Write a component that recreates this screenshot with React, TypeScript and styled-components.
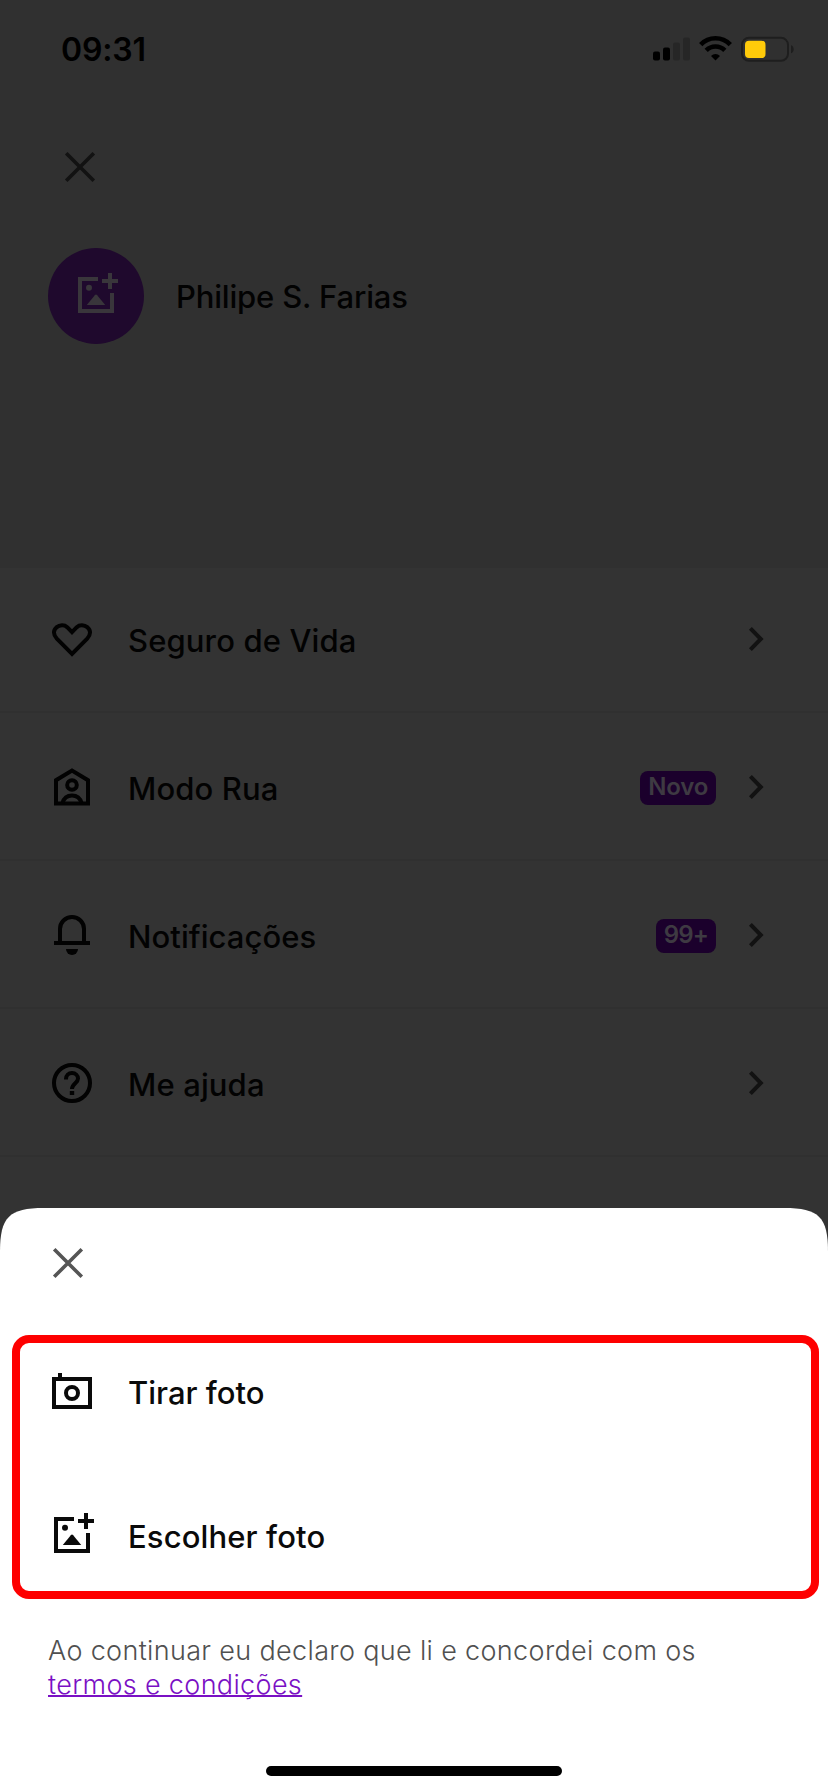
import React from "react";
import styled, { createGlobalStyle } from "styled-components";

const GlobalStyle = createGlobalStyle`
  *, *::before, *::after { box-sizing: border-box; }
  body {
    margin: 0;
    background: #303030;
    font-family: Inter, "Liberation Sans", sans-serif;
  }
`;

const Screen = styled.div`
  width: 828px;
  height: 1792px;
  display: flex;
  flex-direction: column;
  position: relative;
  overflow: hidden;
  background: #333333;
`;

const Header = styled.header`
  height: 568px;
  display: flex;
  flex-direction: column;
  background: #303030;
`;

const StatusBar = styled.div`
  height: 99px;
  display: flex;
  align-items: center;
  justify-content: space-between;
  padding: 0 34px 0 61px;
  color: #000;
`;

const Clock = styled.span`
  font-size: 32px;
  font-weight: 600;
  line-height: 40px;
  letter-spacing: -0.16px;
`;

const StatusIcons = styled.div`
  display: flex;
  align-items: center;
  padding-bottom: 1px;
`;

const PlainButton = styled.button`
  display: flex;
  align-items: center;
  justify-content: center;
  flex: none;
  padding: 0;
  border: 0;
  background: none;
`;

const PageClose = styled(PlainButton)`
  width: 48px;
  height: 48px;
  margin: 44px 0 0 56px;
  color: #121212;
`;

const Profile = styled.div`
  display: flex;
  align-items: center;
  gap: 32px;
  margin: 57px 0 0 48px;
`;

const Avatar = styled.div`
  width: 96px;
  height: 96px;
  display: flex;
  align-items: center;
  justify-content: center;
  padding-bottom: 2px;
  border-radius: 50%;
  background: #1f092d;
  color: #39363b;
`;

const Name = styled.h1`
  margin: 0;
  padding-top: 1px;
  font-size: 31px;
  font-weight: 500;
  line-height: 40px;
  letter-spacing: -0.17px;
  color: #020202;
`;

const MenuList = styled.ul`
  margin: 0;
  padding: 0;
  list-style: none;
`;

const MenuRow = styled.li`
  height: 148px;
  display: flex;
  align-items: center;
  padding: 2px 48px 0;
  border-bottom: 2px solid #303030;
  color: #020202;

  &:first-child {
    height: 145px;
    padding-top: 0;
    padding-bottom: 1px;
  }
`;

const Label = styled.span<{ $tracking?: number }>`
  flex: 1;
  margin-left: 32px;
  padding-top: 3px;
  font-size: 31px;
  font-weight: 500;
  line-height: 40px;
  letter-spacing: ${(p) => p.$tracking ?? 0.13}px;
`;

const Badge = styled.span<{ $tracking?: number }>`
  height: 34px;
  display: flex;
  align-items: center;
  margin: 2px 16px 0 0;
  padding: 0 8px 3px;
  border-radius: 8px;
  background: #1b002c;
  color: #3e3a42;
  font-size: 24px;
  font-weight: 600;
  letter-spacing: ${(p) => p.$tracking ?? -0.25}px;
`;

const Sheet = styled.section`
  position: absolute;
  left: 0;
  right: 0;
  bottom: 0;
  height: 584px;
  display: flex;
  flex-direction: column;
  background: #fff;
  color: #0a0a0a;
  clip-path: path("M0 44C0 9 9 0 44 0H784C819 0 828 9 828 44V584H0Z");
`;

const SheetClose = styled(PlainButton)`
  width: 48px;
  height: 48px;
  margin: 31px 0 0 44px;
  color: #555;
`;

const Options = styled.div`
  display: flex;
  flex-direction: column;
  gap: 96px;
  height: 264px;
  margin: 48px 9px 0 12px;
  padding: 24px 28px;
  border: 8px solid #fe0000;
  border-radius: 17px;
`;

const Option = styled.div`
  height: 48px;
  display: flex;
  align-items: center;
`;

const Terms = styled.p`
  margin: 35px 0 0 48px;
  font-size: 27px;
  font-weight: 300;
  line-height: 34px;
  letter-spacing: 0.34px;
  color: #505050;
`;

const TermsLink = styled.a`
  color: #7a10c4;
  text-decoration: underline;
  text-decoration-thickness: 1.5px;
  text-underline-offset: 1px;
  text-decoration-skip-ink: none;
`;

const HomeIndicator = styled.div`
  width: 296px;
  height: 10px;
  margin: auto auto 16px 266px;
  border-radius: 5px;
  background: #000;
`;

const IconSvg = styled.svg`
  flex: none;
  width: 48px;
  height: 48px;
`;

const Icon = ({ children }: { children: React.ReactNode }) => (
  <IconSvg viewBox="0 0 24 24" fill="none" stroke="currentColor" strokeWidth="2">
    {children}
  </IconSvg>
);

const CloseIcon = () => (
  <Icon>
    <path d="M5.1 5.1 18.9 18.9M18.9 5.1 5.1 18.9" strokeWidth="1.8" />
  </Icon>
);

const ChevronIcon = () => (
  <Icon>
    <path d="M9.2 6.7 14.4 12 9.2 17.3" stroke="#121212" />
  </Icon>
);

const HeartIcon = () => (
  <Icon>
    <path d="M12 19.4 4.4 11.8C2.5 9.8 2.6 7.6 4.2 6.2 5.9 4.8 8.2 4.8 9.6 6.1L12 8.6l2.4-2.5c1.4-1.3 3.7-1.3 5.4.1 1.6 1.4 1.7 3.6-.2 5.6Z" />
  </Icon>
);

const StreetModeIcon = () => (
  <Icon>
    <path d="M4 20.3V8.6l8-4.8 8 4.8v11.7Z" />
    <circle cx="12" cy="11" r="2.4" />
    <path d="M7.2 20c.7-2.4 2.5-3.8 4.8-3.8s4.1 1.4 4.8 3.8" />
  </Icon>
);

const BellIcon = () => (
  <Icon>
    <path d="M6 16V9a6 6 0 0 1 12 0v7" />
    <path d="M3 16h18" />
    <path d="M9 19h6a3 3 0 0 1-6 0Z" fill="currentColor" stroke="none" />
  </Icon>
);

const HelpIcon = () => (
  <Icon>
    <circle cx="12" cy="12" r="9" />
    <path d="M9 10.3V10c0-1.8 1.3-3 3-3s3 1.2 3 2.8c0 2.3-2.9 2.4-3 5.2" />
    <path d="M10.9 16h2.2v2h-2.2Z" fill="currentColor" stroke="none" />
  </Icon>
);

const CameraIcon = () => (
  <Icon>
    <path d="M3 6h18v14H3Z" />
    <path d="M6 3v3" />
    <circle cx="12" cy="13" r="3" />
  </Icon>
);

const AddPhotoIcon = () => (
  <Icon>
    <path d="M13 4H4v16h16v-9" />
    <path d="M19 1v8M15 5h8" />
    <circle cx="8.5" cy="8.4" r="1.5" fill="currentColor" stroke="none" />
    <path d="M7.4 17 11.4 12.1q.6-.7 1.2 0L16.6 17Z" fill="currentColor" stroke="none" />
  </Icon>
);

const StatusGlyphs = () => (
  <svg width="144" height="28" viewBox="0 0 144 28" fill="#000">
    <rect x="3" y="16.5" width="7" height="9" rx="2" />
    <rect x="13" y="12.5" width="7" height="13" rx="2" />
    <rect x="23" y="7.5" width="7" height="18" rx="2" fill="#262626" />
    <rect x="33" y="2.5" width="7" height="23" rx="2" fill="#262626" />
    <g fill="none" stroke="#000" strokeWidth="4.6">
      <path d="M50.7 9.6a20.5 20.5 0 0 1 29.6 0" />
      <path d="M56.2 15.4a13 13 0 0 1 18.6 0" />
    </g>
    <path d="M65.5 25.6 61 20.9a6.5 6.5 0 0 1 9 0Z" />
    <rect x="92" y="2.8" width="46" height="23" rx="7" fill="none" stroke="#1e1e1e" strokeWidth="2" />
    <path d="M141 10.3c3.6 1 3.6 7 0 8Z" fill="#1e1e1e" />
    <rect x="95" y="5.8" width="20.5" height="17.2" rx="4" fill="#ffcb0a" />
  </svg>
);

const menu = [
  { label: "Seguro de Vida", icon: <HeartIcon /> },
  { label: "Modo Rua", icon: <StreetModeIcon />, badge: "Novo" },
  { label: "Notificações", icon: <BellIcon />, badge: "99+", tracking: 0.06, badgeTracking: -0.9 },
  { label: "Me ajuda", icon: <HelpIcon /> },
];

export default function App() {
  return (
    <Screen>
      <GlobalStyle />
      <Header>
        <StatusBar>
          <Clock>09:31</Clock>
          <StatusIcons>
            <StatusGlyphs />
          </StatusIcons>
        </StatusBar>
        <PageClose aria-label="Fechar">
          <CloseIcon />
        </PageClose>
        <Profile>
          <Avatar>
            <AddPhotoIcon />
          </Avatar>
          <Name>Philipe S. Farias</Name>
        </Profile>
      </Header>
      <MenuList>
        {menu.map((item) => (
          <MenuRow key={item.label}>
            {item.icon}
            <Label $tracking={item.tracking}>{item.label}</Label>
            {item.badge && <Badge $tracking={item.badgeTracking}>{item.badge}</Badge>}
            <ChevronIcon />
          </MenuRow>
        ))}
      </MenuList>
      <Sheet>
        <SheetClose aria-label="Fechar">
          <CloseIcon />
        </SheetClose>
        <Options>
          <Option>
            <CameraIcon />
            <Label $tracking={0}>Tirar foto</Label>
          </Option>
          <Option>
            <AddPhotoIcon />
            <Label>Escolher foto</Label>
          </Option>
        </Options>
        <Terms>
          Ao continuar eu declaro que li e concordei com os
          <br />
          <TermsLink>termos e condições</TermsLink>
        </Terms>
        <HomeIndicator />
      </Sheet>
    </Screen>
  );
}
